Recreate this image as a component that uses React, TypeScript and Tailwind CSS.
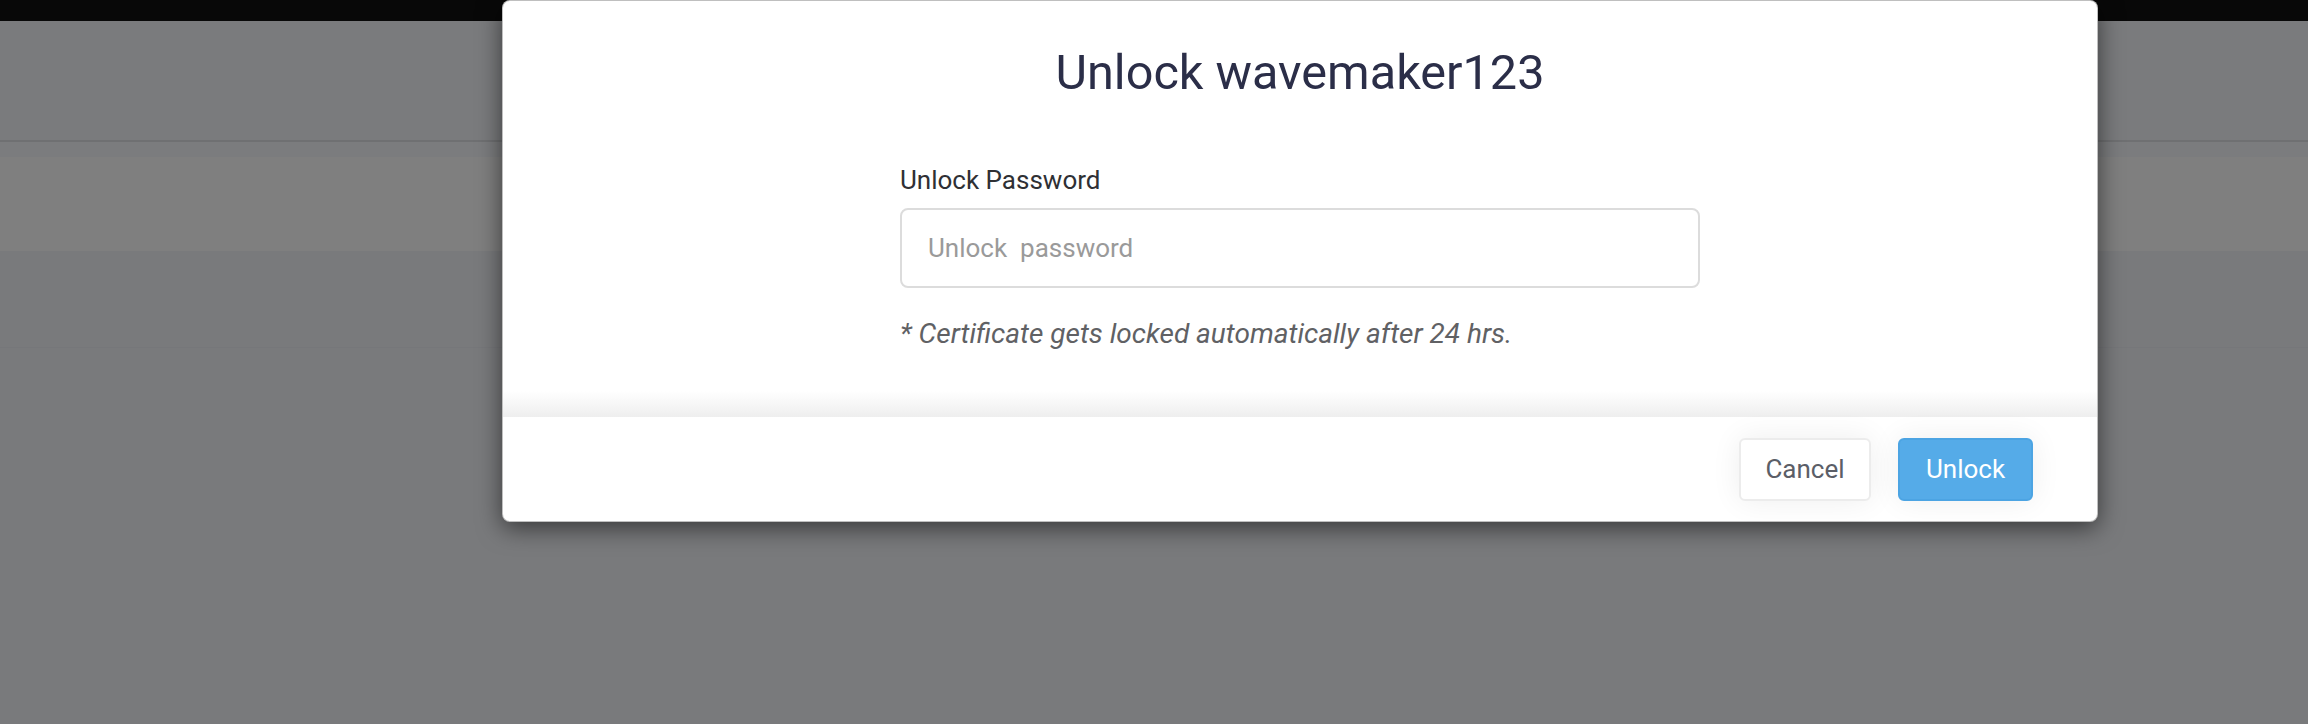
import React from 'react';

const UnlockModal: React.FC = () => {
  return (
    <div className="absolute left-[502px] top-0 w-[1596px] rounded-[8px] border border-[rgba(0,0,0,0.25)] bg-white shadow-[0_6px_24px_rgba(0,0,0,0.55)]">
      <div className="flex flex-col">
        <h2 className="mt-[44px] text-center text-[48.6px] leading-[56px] font-normal text-[#2b2e48]">
          Unlock wavemaker123
        </h2>
        <div className="mx-auto mt-[64px] flex w-[800px] flex-col">
          <label className="text-[26px] leading-[30px] text-[#2f3034]">Unlock Password</label>
          <input
            type="password"
            placeholder="Unlock  password"
            className="mt-[13px] h-[80px] w-full rounded-[8px] border-2 border-[#dcdcdc] px-[26px] text-[26px] text-[#333] outline-none placeholder:text-[#9a9a9a]"
          />
          <p className="mt-[31px] text-[28px] leading-[30px] italic text-[#606164]">
            * Certificate gets locked automatically after 24 hrs.
          </p>
        </div>
        <div className="mt-[42px] h-[26px] bg-gradient-to-b from-white to-[#eeeeee]" />
      </div>
      <div className="flex h-[104px] items-center justify-end gap-[27px] rounded-b-[8px] pr-[64px]">
        <button className="h-[63px] w-[132px] rounded-[6px] border-2 border-[#ececec] bg-white text-[26px] text-[#5b5e67] shadow-[0_0_30px_rgba(0,0,0,0.07)]">
          Cancel
        </button>
        <button className="h-[63px] w-[135px] rounded-[6px] border-2 border-[#4ca4e3] bg-[#55abe8] text-[26px] text-white shadow-[0_0_30px_rgba(0,0,0,0.07)]">
          Unlock
        </button>
      </div>
    </div>
  );
};

export default function App() {
  return (
    <div className="relative h-[724px] w-[2308px] overflow-hidden bg-[#797a7c] font-['Roboto',sans-serif]">
      <div className="flex flex-col">
        <div className="h-[21px] bg-[#080808]" />
        <div className="h-[119px] bg-[#7a7b7d]" />
        <div className="h-[2px] bg-[#6f7072]" />
        <div className="h-[15px] bg-[#7b7c7e]" />
        <div className="h-[94px] bg-[#7f7f7f]" />
        <div className="h-[96px] bg-[#797a7c]" />
        <div className="h-px bg-[#76777a]" />
      </div>
      <UnlockModal />
    </div>
  );
}
